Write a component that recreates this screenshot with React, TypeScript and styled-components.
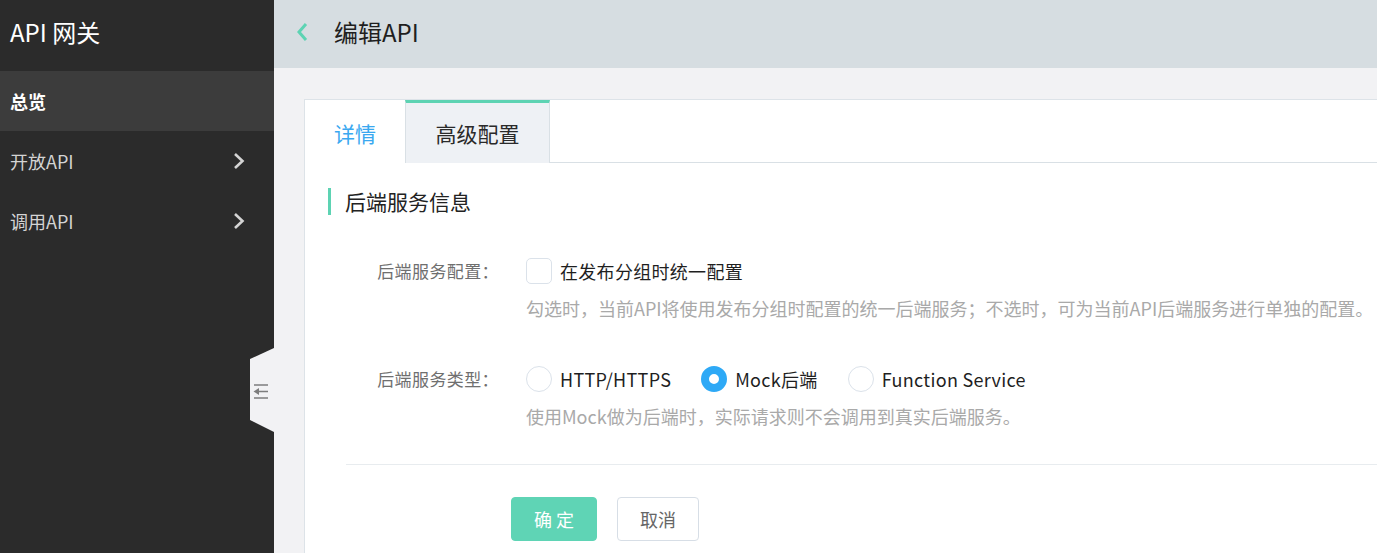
import React from "react";
import styled, { createGlobalStyle } from "styled-components";

const Global = createGlobalStyle`
  html, body { margin: 0; padding: 0; }
  body {
    font-family: "Noto Sans CJK SC", "Noto Sans", sans-serif;
    background: #f2f2f4;
    overflow: hidden;
  }
  * { box-sizing: border-box; }
`;

const teal = "#5dd3b3";

const Shell = styled.div`
  position: relative;
  display: flex;
  width: 100vw;
  height: 100vh;
  overflow: hidden;
`;

const Sidebar = styled.aside`
  width: 274px;
  flex: none;
  background: #2b2b2b;
  display: flex;
  flex-direction: column;
`;

const Brand = styled.div`
  height: 71px;
  display: flex;
  align-items: center;
  padding: 0 0 8px 10px;
  color: #fff;
  font-size: 24px;
`;

const NavItem = styled.div<{ $active?: boolean }>`
  height: 60px;
  display: flex;
  align-items: center;
  justify-content: space-between;
  padding: 0 29px 0 10px;
  font-size: 18px;
  color: ${(p) => (p.$active ? "#fff" : "#d4d4d4")};
  font-weight: ${(p) => (p.$active ? 700 : 400)};
  background: ${(p) => (p.$active ? "#3c3c3c" : "transparent")};
`;

const CollapseTab = styled.div`
  position: absolute;
  left: 250px;
  top: 348px;
  width: 24px;
  height: 84px;
  background: #f2f2f4;
  clip-path: polygon(0 11px, 100% 0, 100% 100%, 0 72px);
  display: flex;
  align-items: center;
  justify-content: center;
  padding: 2px 2px 0 0;
`;

const Main = styled.main`
  flex: 1;
  display: flex;
  flex-direction: column;
  min-width: 0;
`;

const Header = styled.header`
  height: 68px;
  flex: none;
  background: #d6dde1;
  display: flex;
  align-items: center;
  padding: 0 0 5px 22px;
  gap: 26px;
  color: #1f1f1f;
  font-size: 24px;
`;

const Content = styled.div`
  flex: 1;
  padding: 31px 0 0 30px;
  display: flex;
`;

const Card = styled.section`
  flex: 1;
  background: #fff;
  border: 1px solid #dde3e8;
  border-right: none;
  border-bottom: none;
  display: flex;
  flex-direction: column;
`;

const TabBar = styled.div`
  height: 63px;
  display: flex;
  border-bottom: 1px solid #d9e0e5;
`;

const Tab = styled.div<{ $active?: boolean; $w: number }>`
  width: ${(p) => p.$w}px;
  display: flex;
  align-items: center;
  justify-content: center;
  font-size: 21px;
  padding-top: ${(p) => (p.$active ? "0" : "3px")};
  color: ${(p) => (p.$active ? "#2a2a2a" : "#3aa8f0")};
  background: ${(p) => (p.$active ? "#eef1f5" : "#fff")};
  border-top: ${(p) => (p.$active ? `3px solid ${teal}` : "none")};
  border-left: ${(p) => (p.$active ? "1px solid #d9e0e5" : "none")};
  border-right: ${(p) => (p.$active ? "1px solid #d9e0e5" : "none")};
  margin-bottom: -1px;
`;

const Body = styled.div`
  padding: 25px 0 0 23px;
  display: flex;
  flex-direction: column;
`;

const SectionTitle = styled.h2`
  margin: 0;
  height: 27px;
  line-height: 27px;
  border-left: 3px solid ${teal};
  padding-left: 14px;
  font-size: 21px;
  font-weight: 400;
  color: #222;
`;

const Form = styled.div`
  margin: 39px 0 0 18px;
  display: flex;
  flex-direction: column;
`;

const Field = styled.div<{ $top?: number }>`
  display: grid;
  grid-template-columns: 180px 1fr;
  margin-top: ${(p) => p.$top ?? 0}px;
`;

const Label = styled.div`
  height: 34px;
  line-height: 34px;
  text-align: right;
  padding-right: 27px;
  font-size: 17px;
  letter-spacing: 0.4px;
  color: #6f6f6f;
  white-space: nowrap;
`;

const Control = styled.div`
  display: flex;
  flex-direction: column;
`;

const Options = styled.div`
  height: 34px;
  display: flex;
  align-items: center;
  gap: 30px;
`;

const Option = styled.label`
  display: flex;
  align-items: center;
  gap: 8px;
  font-size: 18px;
  letter-spacing: 0.3px;
  color: #1f1f1f;
  white-space: nowrap;
`;

const CheckBox = styled.span`
  width: 26px;
  height: 26px;
  border: 1px solid #dbe2ea;
  border-radius: 5px;
  background: #fff;
`;

const Radio = styled.span<{ $checked?: boolean }>`
  width: 26px;
  height: 26px;
  border-radius: 50%;
  background: #fff;
  border: ${(p) => (p.$checked ? "8px solid #2ea9f6" : "1px solid #dbe2ea")};
`;

const Hint = styled.div`
  margin-top: 8px;
  height: 24px;
  line-height: 24px;
  font-size: 18px;
  color: #a9a9a9;
  white-space: nowrap;
`;

const Divider = styled.hr`
  margin: 36px 0 0 0;
  border: none;
  border-top: 1px solid #e8ecef;
  height: 0;
`;

const Actions = styled.div`
  margin: 32px 0 0 165px;
  display: flex;
  gap: 20px;
`;

const Button = styled.button<{ $primary?: boolean; $w: number }>`
  width: ${(p) => p.$w}px;
  height: 44px;
  border-radius: 4px;
  font-family: inherit;
  font-size: 18px;
  cursor: pointer;
  letter-spacing: ${(p) => (p.$primary ? "4px" : "0")};
  padding: ${(p) => (p.$primary ? "0 0 0 4px" : "0")};
  color: ${(p) => (p.$primary ? "#fff" : "#666")};
  background: ${(p) => (p.$primary ? "#5fd4b5" : "#fff")};
  border: 1px solid ${(p) => (p.$primary ? "#5fd4b5" : "#d7dee6")};
`;

const Chevron = () => (
  <svg width="12" height="18" viewBox="0 0 12 18">
    <path d="M2 2 L9.5 9 L2 16" fill="none" stroke="#d4d4d4" strokeWidth="2.6" />
  </svg>
);

const BackIcon = () => (
  <svg width="12" height="20" viewBox="0 0 12 20">
    <path d="M10 2 L3 10 L10 18" fill="none" stroke={teal} strokeWidth="3" />
  </svg>
);

const CollapseIcon = () => (
  <svg width="16" height="15" viewBox="0 0 16 15">
    <path d="M1 1 H15 M1 14 H15 M5 7.5 H15" stroke="#7d7d7d" strokeWidth="1.5" fill="none" />
    <path d="M0.5 7.5 L6 4 V11 Z" fill="#7d7d7d" />
  </svg>
);

export default function App() {
  return (
    <>
      <Global />
      <Shell>
        <Sidebar>
          <Brand>API 网关</Brand>
          <NavItem $active>总览</NavItem>
          <NavItem>
            开放API
            <Chevron />
          </NavItem>
          <NavItem>
            调用API
            <Chevron />
          </NavItem>
        </Sidebar>
        <Main>
          <Header>
            <BackIcon />
            <span>编辑API</span>
          </Header>
          <Content>
            <Card>
              <TabBar>
                <Tab $w={100}>详情</Tab>
                <Tab $w={145} $active>
                  高级配置
                </Tab>
              </TabBar>
              <Body>
                <SectionTitle>后端服务信息</SectionTitle>
                <Form>
                  <Field>
                    <Label>后端服务配置：</Label>
                    <Control>
                      <Options>
                        <Option>
                          <CheckBox />
                          在发布分组时统一配置
                        </Option>
                      </Options>
                      <Hint>
                        勾选时，当前API将使用发布分组时配置的统一后端服务；不选时，可为当前API后端服务进行单独的配置。
                      </Hint>
                    </Control>
                  </Field>
                  <Field $top={42}>
                    <Label>后端服务类型：</Label>
                    <Control>
                      <Options>
                        <Option>
                          <Radio />
                          HTTP/HTTPS
                        </Option>
                        <Option>
                          <Radio $checked />
                          Mock后端
                        </Option>
                        <Option>
                          <Radio />
                          Function Service
                        </Option>
                      </Options>
                      <Hint>使用Mock做为后端时，实际请求则不会调用到真实后端服务。</Hint>
                    </Control>
                  </Field>
                  <Divider />
                  <Actions>
                    <Button $primary $w={86}>
                      确定
                    </Button>
                    <Button $w={82}>取消</Button>
                  </Actions>
                </Form>
              </Body>
            </Card>
          </Content>
        </Main>
        <CollapseTab>
          <CollapseIcon />
        </CollapseTab>
      </Shell>
    </>
  );
}
